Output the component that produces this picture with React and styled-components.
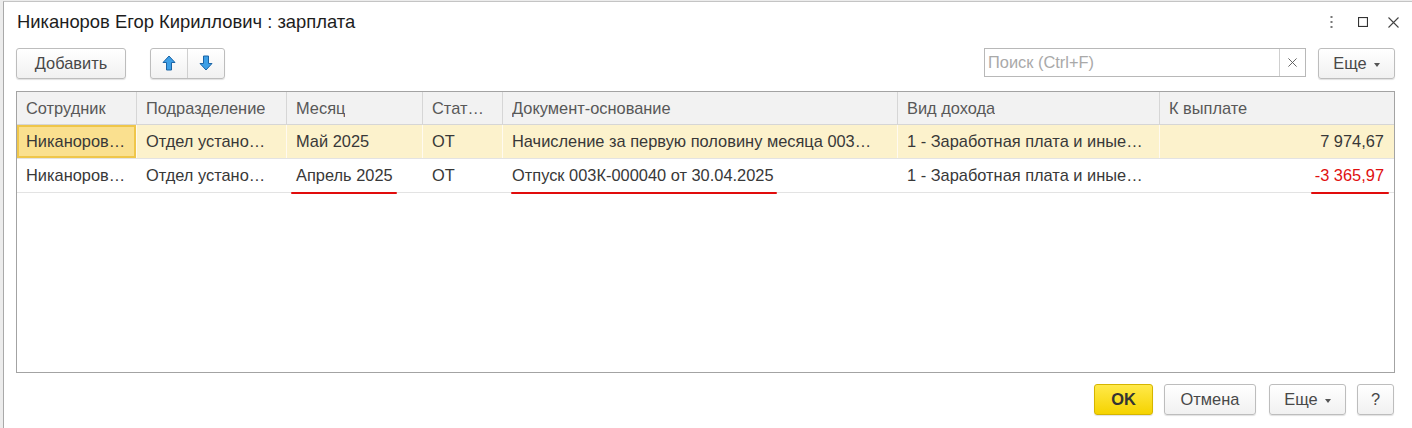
import React from "react";
import styled, { createGlobalStyle, css } from "styled-components";

const Global = createGlobalStyle`
  html, body { margin: 0; padding: 0; }
  body {
    background: #ececec;
    font-family: "Liberation Sans", Arial, sans-serif;
    color: #333;
    overflow: hidden;
  }
`;

const COLS = "119px 150px 136px 80px 395px 262px 1fr";
const FS = "16.4px";

const Window = styled.div`
  margin-left: 3px;
  margin-top: 1px;
  height: 427px;
  background: #fff;
  border-left: 1px solid #a9a9a9;
  border-top: 1px solid #c4c4c4;
  box-sizing: border-box;
  display: flex;
  flex-direction: column;
  padding: 0 17px 0 12px;
`;

const TitleBar = styled.div`
  height: 42px;
  display: flex;
  align-items: center;
  padding-left: 1px;
  padding-bottom: 2px;
  box-sizing: border-box;
`;

const Title = styled.div`
  flex: 1;
  font-size: 18.4px;
  color: #1d1d1d;
`;

const TitleIcons = styled.div`
  display: flex;
  align-items: center;
  margin-right: -4px;
  & > svg:nth-child(2) { margin-left: 25px; }
  & > svg:nth-child(3) { margin-left: 20px; }
`;

const Toolbar = styled.div`
  display: flex;
  align-items: center;
  height: 32px;
  margin-top: 3px;
`;

const buttonBase = css`
  height: 31px;
  box-sizing: border-box;
  border: 1px solid #bdbdbd;
  border-radius: 3px;
  background: linear-gradient(#ffffff, #f1f1f1);
  box-shadow: 0 1px 1px rgba(0, 0, 0, 0.12);
  font-family: inherit;
  font-size: ${FS};
  color: #484848;
  display: flex;
  align-items: center;
  justify-content: center;
  padding: 0;
`;

const Button = styled.button`
  ${buttonBase};
  width: ${(p) => p.$w}px;
  margin-left: ${(p) => p.$ml || 0}px;
  margin-right: ${(p) => p.$mr || 0}px;
`;

const OkButton = styled.button`
  ${buttonBase};
  width: 59px;
  border-color: #d5b500;
  background: linear-gradient(#ffe94a, #f5d300);
  font-weight: bold;
  color: #333;
`;

const ButtonGroup = styled.div`
  display: flex;
  margin-left: 24px;
  height: 31px;
  border: 1px solid #bdbdbd;
  border-radius: 3px;
  background: linear-gradient(#ffffff, #f1f1f1);
  box-shadow: 0 1px 1px rgba(0, 0, 0, 0.12);
  box-sizing: border-box;
`;

const GroupPart = styled.div`
  width: 36px;
  display: flex;
  align-items: center;
  justify-content: center;
  & + & { border-left: 1px solid #cfcfcf; }
`;

const Spacer = styled.div`
  flex: 1;
`;

const Search = styled.div`
  width: 322px;
  height: 29px;
  box-sizing: border-box;
  border: 1px solid #b8b8b8;
  display: flex;
  margin-top: -2px;
`;

const SearchInput = styled.div`
  flex: 1;
  font-size: ${FS};
  color: #a9a9a9;
  display: flex;
  align-items: center;
  padding-left: 3px;
`;

const SearchClear = styled.div`
  width: 25px;
  border-left: 1px solid #cfcfcf;
  display: flex;
  align-items: center;
  justify-content: center;
`;

const Caret = styled.span`
  display: inline-block;
  width: 0;
  height: 0;
  border-left: 3.5px solid transparent;
  border-right: 3.5px solid transparent;
  border-top: 4px solid #555;
  margin-left: 7px;
  margin-top: 3px;
`;

const Table = styled.div`
  margin-top: 12px;
  height: 282px;
  border: 1px solid #a3a3a3;
  box-sizing: border-box;
  display: flex;
  flex-direction: column;
`;

const Row = styled.div`
  display: grid;
  grid-template-columns: ${COLS};
  height: ${(p) => (p.$head ? 33 : 34)}px;
  background: ${(p) => (p.$head ? "#f2f2f2" : p.$active ? "#fcf2cc" : "#fff")};
  border-bottom: 1px solid ${(p) => (p.$head ? "#d6d6d6" : "#e3e3e3")};
  box-sizing: border-box;
  font-size: ${FS};
  color: ${(p) => (p.$head ? "#585858" : "#383838")};
`;

const Cell = styled.div`
  display: flex;
  align-items: center;
  justify-content: ${(p) => (p.$right ? "flex-end" : "flex-start")};
  padding: 0 10px 0 9px;
  min-width: 0;
  white-space: nowrap;
  box-sizing: border-box;
  border-left: 1px solid ${(p) => p.$line || "transparent"};
  &:first-child { border-left: none; }
  ${(p) =>
    p.$selected &&
    css`
      background: #fae08f;
      box-shadow: inset 0 0 0 2px #efc64a;
    `}
`;

const Text = styled.span`
  overflow: hidden;
  text-overflow: ellipsis;
`;

const Mark = styled.span`
  position: relative;
  color: ${(p) => p.$color || "inherit"};
  &::after {
    content: "";
    position: absolute;
    left: ${(p) => p.$l || -5}px;
    right: ${(p) => p.$r || -4}px;
    bottom: -9px;
    height: 2.5px;
    border-radius: 2px;
    background: #e10c0c;
  }
`;

const Footer = styled.div`
  display: flex;
  justify-content: flex-end;
  align-items: center;
  gap: 11px;
  margin-top: 11px;
  margin-right: 1px;
`;

const ArrowUp = () => (
  <svg width="14" height="16" viewBox="0 0 14 16">
    <path
      d="M7 1 L13 7.5 L9.5 7.5 L9.5 15 L4.5 15 L4.5 7.5 L1 7.5 Z"
      fill="#3d9fe6"
      stroke="#1b64a6"
      strokeWidth="1"
      strokeLinejoin="round"
    />
  </svg>
);

const ArrowDown = () => (
  <svg width="14" height="16" viewBox="0 0 14 16">
    <path
      d="M7 15 L13 8.5 L9.5 8.5 L9.5 1 L4.5 1 L4.5 8.5 L1 8.5 Z"
      fill="#3d9fe6"
      stroke="#1b64a6"
      strokeWidth="1"
      strokeLinejoin="round"
    />
  </svg>
);

const Kebab = () => (
  <svg width="3" height="12" viewBox="0 0 3 12">
    <rect x="0.5" y="0" width="2" height="2" fill="#777" />
    <rect x="0.5" y="5" width="2" height="2" fill="#777" />
    <rect x="0.5" y="10" width="2" height="2" fill="#777" />
  </svg>
);

const Maximize = () => (
  <svg width="10" height="10" viewBox="0 0 10 10">
    <rect x="0.5" y="0.5" width="9" height="9" fill="none" stroke="#333" strokeWidth="1.2" />
  </svg>
);

const Close = ({ size = 11, color = "#444" }) => (
  <svg width={size} height={size} viewBox="0 0 11 11">
    <path d="M0.5 0.5 L10.5 10.5 M10.5 0.5 L0.5 10.5" stroke={color} strokeWidth="1.1" />
  </svg>
);

const head = ["Сотрудник", "Подразделение", "Месяц", "Стат…", "Документ-основание", "Вид дохода", "К выплате"];

export default function App() {
  return (
    <>
      <Global />
      <Window>
        <TitleBar>
          <Title>Никаноров Егор Кириллович : зарплата</Title>
          <TitleIcons>
            <Kebab />
            <Maximize />
            <Close />
          </TitleIcons>
        </TitleBar>

        <Toolbar>
          <Button $w={110}>Добавить</Button>
          <ButtonGroup>
            <GroupPart>
              <ArrowUp />
            </GroupPart>
            <GroupPart>
              <ArrowDown />
            </GroupPart>
          </ButtonGroup>
          <Spacer />
          <Search>
            <SearchInput>Поиск (Ctrl+F)</SearchInput>
            <SearchClear>
              <Close size={9} color="#555" />
            </SearchClear>
          </Search>
          <Button $w={77} $ml={12}>
            Еще <Caret />
          </Button>
        </Toolbar>

        <Table>
          <Row $head>
            {head.map((h) => (
              <Cell key={h} $line="#d6d6d6">
                <Text>{h}</Text>
              </Cell>
            ))}
          </Row>
          <Row $active>
            <Cell $selected>
              <Text>Никаноров…</Text>
            </Cell>
            <Cell $line="#fffaf0">
              <Text>Отдел устано…</Text>
            </Cell>
            <Cell $line="#fffaf0">
              <Text>Май 2025</Text>
            </Cell>
            <Cell $line="#fffaf0">
              <Text>ОТ</Text>
            </Cell>
            <Cell $line="#fffaf0">
              <Text>Начисление за первую половину месяца 003…</Text>
            </Cell>
            <Cell $line="#fffaf0">
              <Text>1 - Заработная плата и иные…</Text>
            </Cell>
            <Cell $line="#fffaf0" $right>
              <Text>7 974,67</Text>
            </Cell>
          </Row>
          <Row>
            <Cell>
              <Text>Никаноров…</Text>
            </Cell>
            <Cell>
              <Text>Отдел устано…</Text>
            </Cell>
            <Cell>
              <Mark>Апрель 2025</Mark>
            </Cell>
            <Cell>
              <Text>ОТ</Text>
            </Cell>
            <Cell>
              <Mark $l={-1} $r={-3}>Отпуск 003К-000040 от 30.04.2025</Mark>
            </Cell>
            <Cell>
              <Text>1 - Заработная плата и иные…</Text>
            </Cell>
            <Cell $right>
              <Mark $color="#e01010" $l={-4} $r={-5}>-3 365,97</Mark>
            </Cell>
          </Row>
        </Table>

        <Footer>
          <OkButton>OK</OkButton>
          <Button $w={92} $mr={2}>Отмена</Button>
          <Button $w={77}>
            Еще <Caret />
          </Button>
          <Button $w={37}>?</Button>
        </Footer>
      </Window>
    </>
  );
}
